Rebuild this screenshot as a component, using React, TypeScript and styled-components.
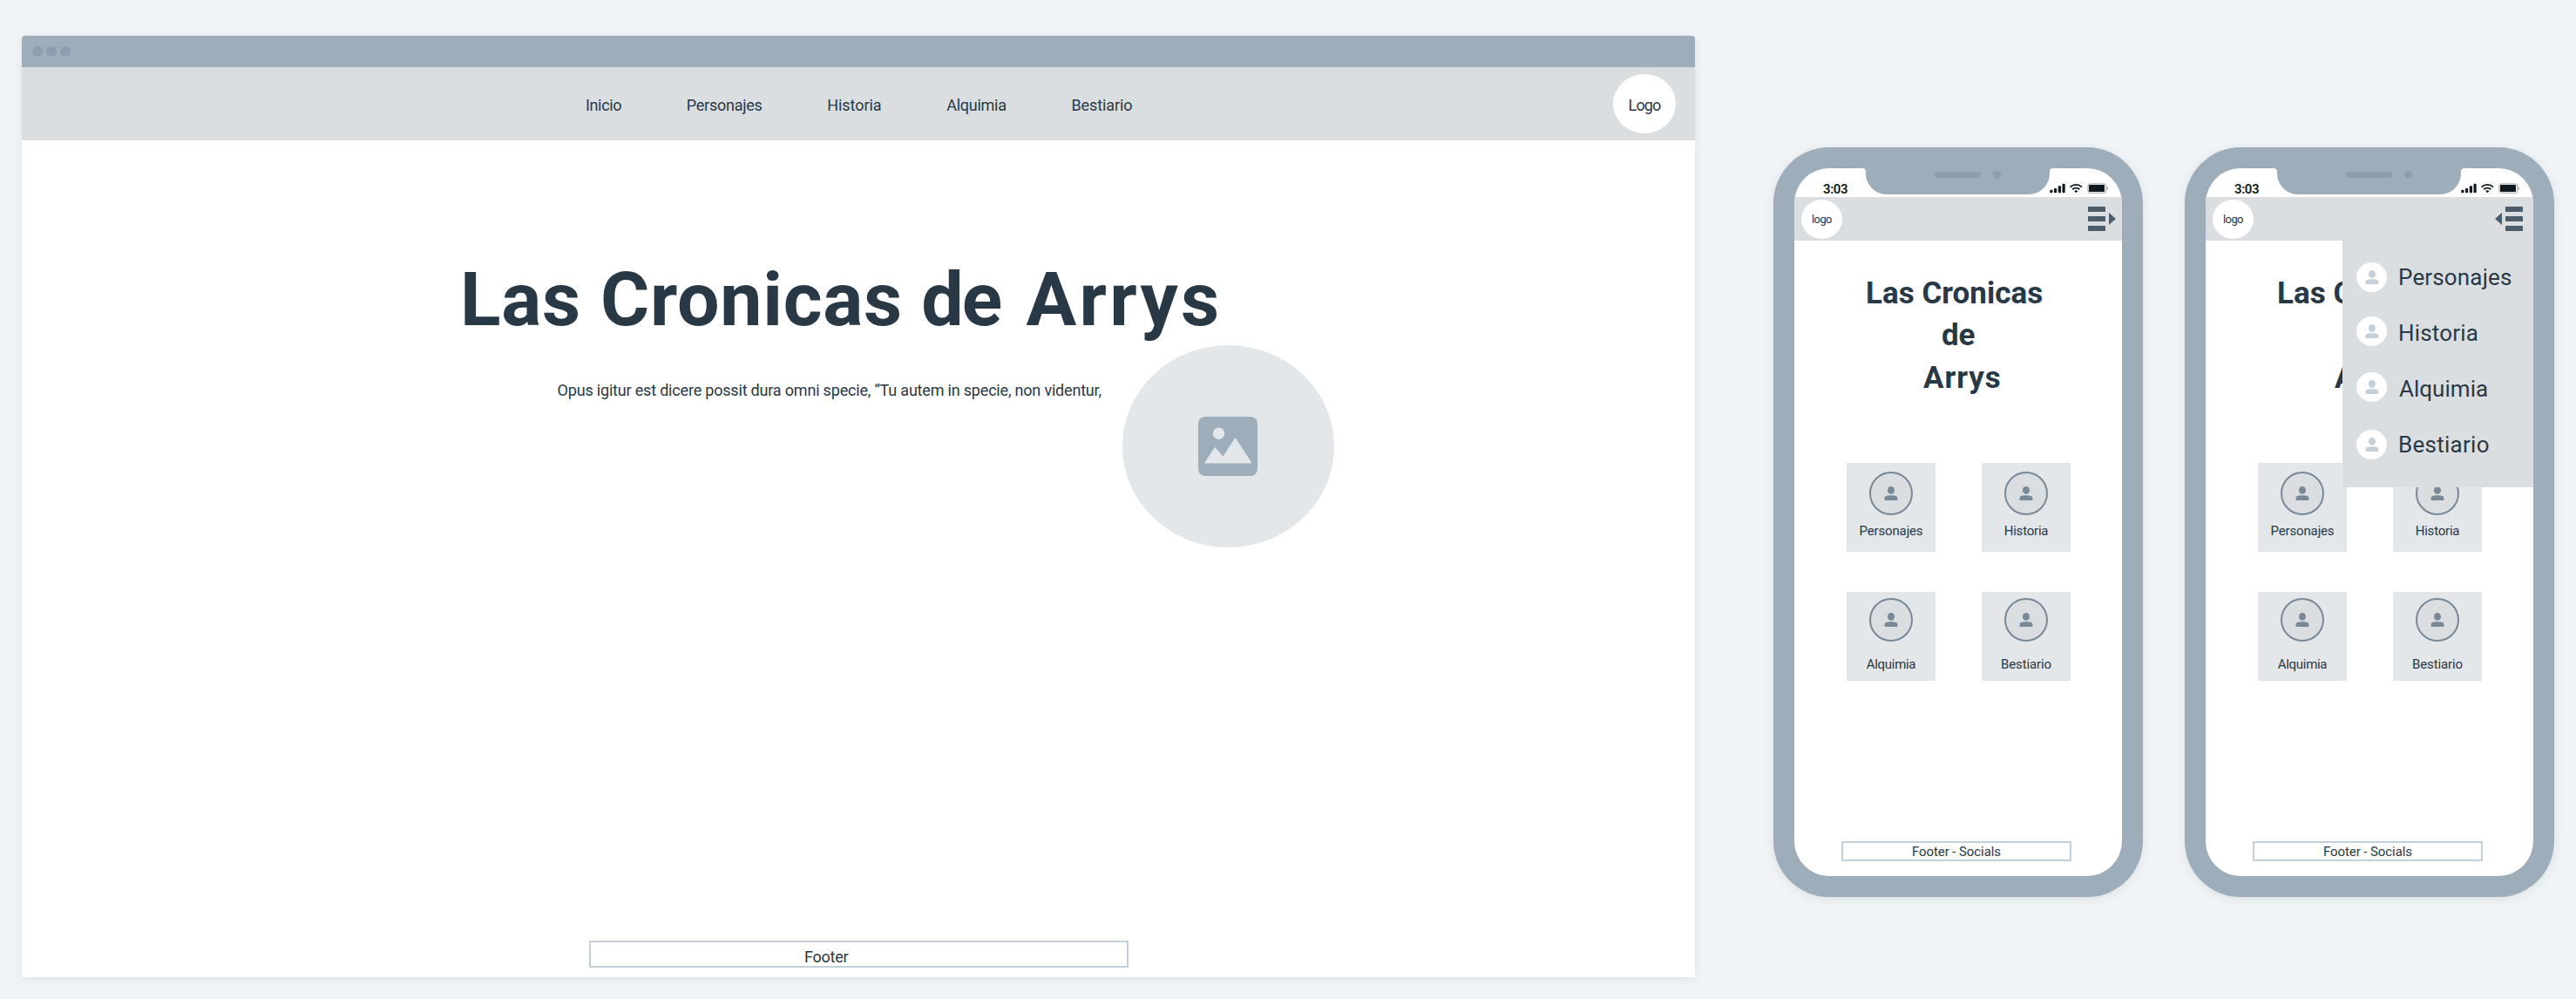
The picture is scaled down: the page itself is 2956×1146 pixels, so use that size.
import React from 'react';
import styled, { createGlobalStyle } from 'styled-components';

const color = {
  canvas: '#f0f4f7',
  frame: '#9eadba',
  frameDetail: '#8f9eae',
  bar: '#dadee1',
  card: '#e3e7ea',
  outline: '#c3cfd9',
  ink: '#293845',
  slate: '#4b5c6b',
  muted: '#788896',
  status: '#101820',
};

const GlobalStyle = createGlobalStyle`
  * { box-sizing: border-box; }
  body {
    margin: 0;
    background: ${color.canvas};
    color: ${color.ink};
    font-family: Roboto, "Liberation Sans", sans-serif;
  }
`;

const Board = styled.main`
  display: flex;
  align-items: flex-start;
  width: 2956px;
  height: 1146px;
  padding: 41px 25px 0;
  overflow: hidden;
`;

/* ---------- Desktop ---------- */

const Window = styled.section`
  display: flex;
  flex-direction: column;
  width: 1920px;
  height: 1080px;
  margin-right: 90px;
  background: #fff;
  border-radius: 4px 4px 0 0;
  box-shadow: 0 2px 10px rgba(41, 56, 69, 0.1);
`;

const TitleBar = styled.div`
  display: flex;
  align-items: center;
  gap: 4px;
  height: 36px;
  padding-left: 12px;
  background: ${color.frame};
  border-radius: 4px 4px 0 0;
`;

const Dot = styled.span`
  width: 12px;
  height: 12px;
  border-radius: 50%;
  background: ${color.frameDetail};
`;

const NavBar = styled.header`
  display: flex;
  align-items: center;
  justify-content: space-between;
  height: 84px;
  padding: 0 22px 0 647px;
  background: ${color.bar};
`;

const Links = styled.nav`
  display: flex;
  gap: 74.7px;
  padding-top: 4px;
`;

const Label = styled.span<{ $track?: number }>`
  font-size: 18px;
  line-height: 24px;
  letter-spacing: ${(p) => p.$track ?? 0}px;
  white-space: nowrap;
`;

const Logo = styled.div`
  display: flex;
  align-items: center;
  justify-content: center;
  width: 72px;
  height: 68px;
  padding-top: 4px;
  border-radius: 50%;
  background: #fff;
`;

const Title = styled.h1`
  margin: 133px 0 2px 503px;
  font-size: 86px;
  font-weight: 700;
  line-height: 100px;
  white-space: nowrap;
`;

const TitleWord = styled.span<{ $track: number; $after?: number }>`
  margin-right: ${(p) => p.$after ?? 0}px;
  letter-spacing: ${(p) => p.$track}px;
`;

const Intro = styled.div`
  display: flex;
  padding-left: 614.6px;
`;

const Lead = styled.p`
  width: 648.6px;
  margin: 40px 0 0;
  font-size: 18px;
  line-height: 24px;
  letter-spacing: -0.19px;
  white-space: nowrap;
`;

const Picture = styled.div`
  display: flex;
  align-items: center;
  justify-content: center;
  width: 243px;
  height: 232px;
  padding: 0 1px 1px 0;
  border-radius: 50%;
  background: ${color.card};
`;

const WindowFooter = styled.footer`
  display: flex;
  align-items: center;
  width: 619px;
  height: 31px;
  margin: auto 0 11px 651px;
  padding: 6px 0 0 245px;
  border: 2px solid ${color.outline};
`;

/* ---------- Phone ---------- */

const Phones = styled.div`
  display: flex;
  gap: 48px;
  padding-top: 128px;
`;

const Frame = styled.section`
  width: 424px;
  height: 860px;
  padding: 24px;
  border-radius: 64px;
  background: ${color.frame};
  box-shadow: 0 2px 12px rgba(41, 56, 69, 0.1);
`;

const Screen = styled.div`
  position: relative;
  display: flex;
  flex-direction: column;
  width: 376px;
  height: 812px;
  border-radius: 40px;
  background: #fff;
  overflow: hidden;
`;

const Notch = styled.svg`
  position: absolute;
  top: 0;
  left: 78px;
  display: block;
`;

const StatusBar = styled.div`
  display: flex;
  flex: none;
  align-items: flex-start;
  justify-content: space-between;
  height: 33px;
  padding: 17px 16px 0 33px;
  color: ${color.status};
`;

const Clock = styled.span`
  font-size: 15px;
  font-weight: 600;
  line-height: 14px;
  letter-spacing: -0.4px;
`;

const AppBar = styled.header<{ $end: number }>`
  display: flex;
  flex: none;
  align-items: flex-start;
  justify-content: space-between;
  height: 50px;
  padding: 3px ${(p) => p.$end}px 0 8px;
  background: ${color.bar};
`;

const SmallLogo = styled.div`
  display: flex;
  align-items: center;
  justify-content: center;
  width: 47px;
  height: 45px;
  border-radius: 50%;
  background: #fff;
  font-size: 13px;
  letter-spacing: -0.6px;
`;

const MenuToggle = styled.svg`
  display: block;
  margin-top: 8px;
`;

const Headline = styled.h2`
  margin: 37px 0 73px;
  font-size: 35px;
  font-weight: 700;
  line-height: 48.4px;
  text-align: center;
`;

const HeadlineRow = styled.span<{ $track?: number }>`
  display: block;
  letter-spacing: ${(p) => p.$track ?? 0}px;
`;

const Grid = styled.div`
  display: grid;
  grid-template-columns: 102px 102px;
  grid-auto-rows: 102px;
  gap: 46px 53px;
  padding-left: 60px;
`;

const Card = styled.div<{ $top: number; $gap: number }>`
  display: flex;
  flex-direction: column;
  align-items: center;
  gap: ${(p) => p.$gap}px;
  padding-top: ${(p) => p.$top}px;
  background: ${color.card};
`;

const CardIcon = styled.div`
  display: flex;
  align-items: center;
  justify-content: center;
  width: 50px;
  height: 50px;
  border: 2px solid ${color.muted};
  border-radius: 50%;
  background: ${color.bar};
`;

const CardLabel = styled.span<{ $track: number }>`
  font-size: 15px;
  line-height: 18px;
  letter-spacing: ${(p) => p.$track}px;
`;

const PhoneFooter = styled.footer`
  display: flex;
  flex: none;
  align-items: center;
  justify-content: center;
  width: 264px;
  height: 23px;
  margin: auto 0 17px 54px;
  padding-top: 1px;
  border: 2px solid ${color.outline};
  font-size: 15px;
  line-height: 18px;
  letter-spacing: -0.08px;
`;

const Drawer = styled.nav`
  position: absolute;
  top: 83px;
  right: 0;
  width: 219px;
  height: 283px;
  padding: 10px 0 0 16px;
  background: ${color.bar};
`;

const DrawerItem = styled.div<{ $inset: number; $track: number }>`
  display: flex;
  align-items: center;
  gap: ${(p) => p.$inset}px;
  height: 64px;
  font-size: 26px;
  letter-spacing: ${(p) => p.$track}px;
  white-space: nowrap;
`;

const DrawerIcon = styled.div<{ $lift: number }>`
  display: flex;
  align-items: center;
  justify-content: center;
  width: 35px;
  height: 34px;
  margin-bottom: ${(p) => p.$lift}px;
  border-radius: 50%;
  background: #fff;
`;

/* ---------- Drawings ---------- */

const Person = ({ fill }: { fill: string }) => (
  <svg width="16" height="16" viewBox="0 0 16 16" fill={fill}>
    <ellipse cx="8" cy="4.4" rx="4" ry="4.4" />
    <path d="M.6 16V13.2C.6 11 3.6 10.2 8 10.2S15.4 11 15.4 13.2V16Z" />
  </svg>
);

const Landscape = () => (
  <svg width="68" height="68" viewBox="0 0 68 68">
    <rect width="68" height="68" rx="8" fill={color.frame} />
    <circle cx="23.5" cy="19.2" r="6.7" fill={color.card} />
    <path
      d="M8.2 53.5Q7 53.5 7.8 52L18.6 35.4Q19 34.8 19.5 35.4L28.5 45.6 41.8 25Q42.5 24 43.3 25L60.6 51.8Q61.3 53.5 60 53.5Z"
      fill={color.card}
    />
  </svg>
);

const NotchShape = () => (
  <Notch width="220" height="30" viewBox="0 0 220 30">
    <path d="M0 0Q4 0 4 4V6A24 24 0 0 0 28 30H191A24 24 0 0 0 215 6V4Q215 0 219 0Z" fill={color.frame} />
    <rect x="83" y="4" width="53" height="7" rx="3.5" fill={color.frameDetail} />
    <circle cx="154.5" cy="7.5" r="4.5" fill={color.frameDetail} />
  </Notch>
);

const StatusIcons = () => (
  <svg width="67" height="13" viewBox="0 0 67 13" fill={color.status}>
    <rect x="0.3" y="7.7" width="3.2" height="3.6" rx="1" />
    <rect x="5" y="6" width="3.2" height="5.3" rx="1" />
    <rect x="9.8" y="3.3" width="3.2" height="8" rx="1" />
    <rect x="14.5" y="0.7" width="3.2" height="10.6" rx="1" />
    <g fill="none" stroke={color.status} strokeWidth="1.9">
      <path d="M23.6 4.6A9.6 9.6 0 0 1 37 4.6" />
      <path d="M26.2 7.3A5.9 5.9 0 0 1 34.4 7.3" />
    </g>
    <path d="M30.3 11.3 28.2 9.2A3 3 0 0 1 32.4 9.2Z" />
    <rect x="43.9" y="0.9" width="20.9" height="10.4" rx="2.6" fill="none" stroke={color.status} strokeOpacity="0.4" />
    <rect x="45" y="2.1" width="18" height="8" rx="1.2" />
    <path d="M65.7 4.2Q67 4.8 67 6.1T65.7 8Z" opacity="0.45" />
  </svg>
);

const Toggle = ({ open }: { open: boolean }) => (
  <MenuToggle width="32" height="28" viewBox="0 0 32 28" fill={color.slate}>
    {[0, 11, 22].map((y) => (
      <rect key={y} x={open ? 12 : 0} y={y} width="20" height="6" rx="0.6" />
    ))}
    <path d={open ? 'M8 7V21L0 14Z' : 'M24 7V21L32 14Z'} />
  </MenuToggle>
);

/* ---------- Content ---------- */

const links = [
  { name: 'Inicio', track: -0.36 },
  { name: 'Personajes', track: -0.26 },
  { name: 'Historia', track: -0.05 },
  { name: 'Alquimia', track: -0.27 },
  { name: 'Bestiario', track: -0.1 },
];

const cards = [
  { name: 'Personajes', top: 10, gap: 9, track: -0.15 },
  { name: 'Historia', top: 10, gap: 9, track: -0.21 },
  { name: 'Alquimia', top: 7, gap: 17, track: -0.3 },
  { name: 'Bestiario', top: 7, gap: 17, track: -0.1 },
];

const drawerItems = [
  { name: 'Personajes', lift: 0, inset: 13, track: 0.15 },
  { name: 'Historia', lift: 4, inset: 13, track: 0.17 },
  { name: 'Alquimia', lift: 4, inset: 14, track: 0.02 },
  { name: 'Bestiario', lift: 0, inset: 13, track: 0.27 },
];

const Phone = ({ open = false }: { open?: boolean }) => (
  <Frame>
    <Screen>
      <StatusBar>
        <Clock>3:03</Clock>
        <StatusIcons />
      </StatusBar>
      <NotchShape />
      <AppBar $end={open ? 12 : 7}>
        <SmallLogo>logo</SmallLogo>
        <Toggle open={open} />
      </AppBar>
      <Headline>
        <HeadlineRow>Las Cronicas{'\u00a0'}</HeadlineRow>
        <HeadlineRow $track={-0.4}>de</HeadlineRow>
        <HeadlineRow $track={0.9}>{'\u00a0'}Arrys</HeadlineRow>
      </Headline>
      <Grid>
        {cards.map((c) => (
          <Card key={c.name} $top={c.top} $gap={c.gap}>
            <CardIcon>
              <Person fill={color.muted} />
            </CardIcon>
            <CardLabel $track={c.track}>{c.name}</CardLabel>
          </Card>
        ))}
      </Grid>
      <PhoneFooter>Footer - Socials</PhoneFooter>
      {open && (
        <Drawer>
          {drawerItems.map((d) => (
            <DrawerItem key={d.name} $inset={d.inset} $track={d.track}>
              <DrawerIcon $lift={d.lift}>
                <Person fill={color.outline} />
              </DrawerIcon>
              {d.name}
            </DrawerItem>
          ))}
        </Drawer>
      )}
    </Screen>
  </Frame>
);

export default function App() {
  return (
    <>
      <GlobalStyle />
      <Board>
        <Window>
          <TitleBar>
            <Dot />
            <Dot />
            <Dot />
          </TitleBar>
          <NavBar>
            <Links>
              {links.map((l) => (
                <Label key={l.name} $track={l.track}>
                  {l.name}
                </Label>
              ))}
            </Links>
            <Logo>
              <Label $track={-0.86}>Logo</Label>
            </Logo>
          </NavBar>
          <Title>
            <TitleWord $track={0.73}>Las Cronicas</TitleWord>{' '}
            <TitleWord $track={-2} $after={8}>de</TitleWord>{' '}
            <TitleWord $track={3.2}>Arrys</TitleWord>
          </Title>
          <Intro>
            <Lead>Opus igitur est dicere possit dura omni specie, “Tu autem in specie, non videntur,</Lead>
            <Picture>
              <Landscape />
            </Picture>
          </Intro>
          <WindowFooter>
            <Label $track={-0.25}>Footer</Label>
          </WindowFooter>
        </Window>
        <Phones>
          <Phone />
          <Phone open />
        </Phones>
      </Board>
    </>
  );
}
